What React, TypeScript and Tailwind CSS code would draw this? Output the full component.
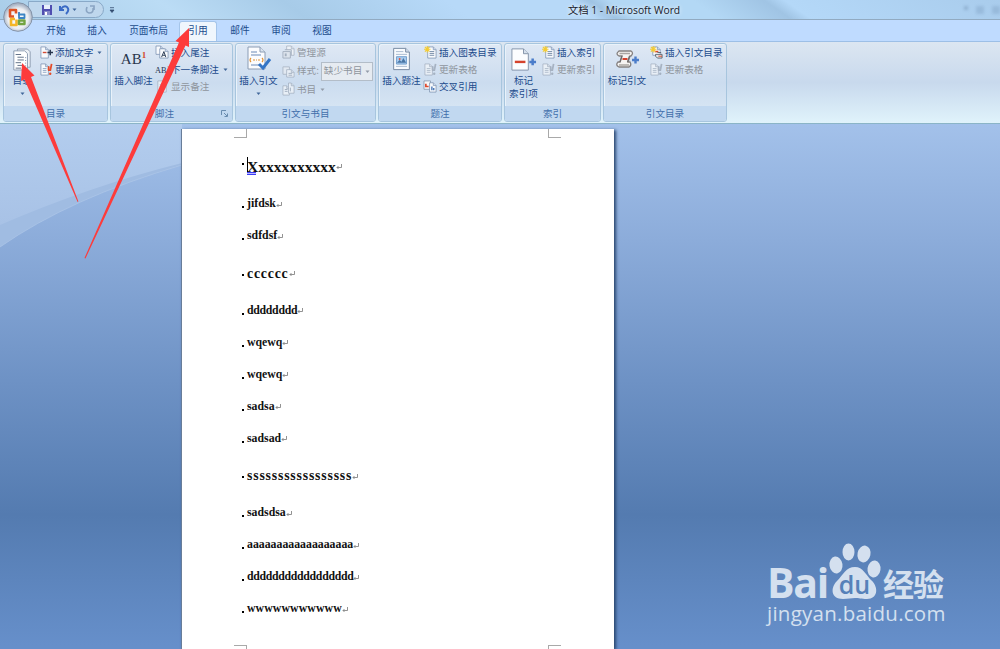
import type { ReactNode } from 'react'

type IconName = 'add' | 'update' | 'endnote' | 'next' | 'notes' | 'manage' | 'style' | 'biblio' | 'figures' | 'cross' | 'index' | 'authorities'

const tabs = [
  { label: '开始', width: 'w-[40px]' },
  { label: '插入', width: 'w-[42px]' },
  { label: '页面布局', width: 'w-[61px]' },
  { label: '引用', width: 'w-[38px]', active: true },
  { label: '邮件', width: 'w-[46px]' },
  { label: '审阅', width: 'w-[36px]' },
  { label: '视图', width: 'w-[46px]' },
]

const paragraphs = [
  { text: 'jifdsk' },
  { text: 'sdfdsf' },
  { text: 'cccccc', heading: true, tracking: 'tracking-[0.8px]' },
  { text: 'dddddddd', tracking: 'tracking-[-0.28px]' },
  { text: 'wqewq' },
  { text: 'wqewq' },
  { text: 'sadsa' },
  { text: 'sadsad' },
  { text: 'sssssssssssssssss', heading: true, tracking: 'tracking-[0.82px]' },
  { text: 'sadsdsa' },
  { text: 'aaaaaaaaaaaaaaaaaa' },
  { text: 'ddddddddddddddddd', tracking: 'tracking-[-0.3px]' },
  { text: 'wwwwwwwwwww', tracking: 'tracking-[0.1px]' },
]

function Page({ x = 2, y = 1, w = 9, h = 12 }: { x?: number; y?: number; w?: number; h?: number }) {
  return (
    <g>
      <path d={`M${x} ${y}h${w - 3}l3 3v${h - 3}h-${w}z`} fill="#f8fafd" stroke="#7a8fb0" strokeWidth=".8" />
      <path d={`M${x + w - 3} ${y}v3h3`} fill="#c8d6e8" stroke="#7a8fb0" strokeWidth=".7" />
    </g>
  )
}

function Star() {
  return <path d="M3.5 0v7M0 3.5h7M1 1l5 5M6 1 1 6" stroke="#f5cc32" strokeWidth="1.2" />
}

function SmallIcon({ name }: { name: IconName }) {
  return (
    <svg width="13" height="13" viewBox="0 0 14 14" fill="none" className="shrink-0 overflow-visible">
      {name === 'add' && (<><Page x={1} w={8} /><path d="M3 7h4" stroke="#d34b35" strokeWidth="1.5" /><path d="M8 7h6M11 4v6" stroke="#26344c" strokeWidth="1.6" /></>)}
      {name === 'update' && (<><Page x={1} w={8} /><path d="M3 6h4M3 8h4M3 10h4" stroke="#91a6c4" /><path d="M9.5 3.5q-.5 3 0 5M12.5 1 11 8.5" stroke="#e54b28" strokeWidth="1.9" /><circle cx="11" cy="11.5" r="1.3" fill="#e54b28" /></>)}
      {name === 'endnote' && (<><Page x={0} y={0} w={8} h={9} /><Page x={4} y={3} w={9} h={10} /><path d="M6 12 8.5 6l2 6M7 10h3" stroke="#25364f" /></>)}
      {name === 'next' && <text x="-1" y="11" fontSize="9" fontFamily="Liberation Serif" fill="#273651">AB<tspan fontSize="7" dy="-4" fill="#d34b35">1</tspan></text>}
      {name === 'notes' && (<><Page /><path d="M4 5h5M4 7h5M4 9h5" stroke="#91a6c4" /></>)}
      {name === 'manage' && (<><Page x={5} y={0} w={8} h={10} /><path d="M1 6h8v7H1zM3 4h7v6" fill="#dbe5f1" stroke="#758eb1" /><path d="M4 8v3" stroke="#758eb1" strokeWidth="2" /></>)}
      {name === 'style' && (<><path d="M1 2h7v8H1z" fill="#e9eff7" stroke="#8da2be" /><Page x={5} y={5} w={8} h={8} /><path d="M7 9h4M7 11h4" stroke="#758eb1" /></>)}
      {name === 'biblio' && (<><Page x={1} y={3} w={7} h={10} /><Page x={7} y={0} w={6} h={11} /><path d="M3 7h3M3 9h3M9 5v4" stroke="#758eb1" /></>)}
      {(name === 'figures' || name === 'index') && (<><Page x={4} w={9} /><path d="M6 6h5M6 8h5M6 10h5" stroke="#7389a5" /><Star /></>)}
      {name === 'cross' && (<><path d="M0 1h7v9H0z" fill="#f6f8fb" stroke="#71839d" strokeWidth=".7" /><Page x={6} y={3} w={7} h={10} /><path d="M2 4v3h3" stroke="#df482d" strokeWidth="1.8" /><path d="M8.5 7v4M10.5 8.5v2.5" stroke="#3d6eb2" strokeWidth="1.4" /></>)}
      {name === 'authorities' && (<><Page x={3} y={1} w={8} h={9} /><path d="M5 6h4" stroke="#d7472d" strokeWidth="1.7" /><path d="M6 9h7v4H8l-2-2zM8 7h4" fill="#e5e5e5" stroke="#59616d" /><path d="M9 11h4" stroke="#d7472d" /><Star /></>)}
    </svg>
  )
}

function Caret({ muted = false }: { muted?: boolean }) {
  return <svg width="5" height="3" viewBox="0 0 5 3" className="shrink-0"><path d="M.5.5h4l-2 2.5z" fill={muted ? '#929ba8' : '#41679a'} /></svg>
}

function Small({ icon, children, disabled, caret }: { icon: IconName; children: ReactNode; disabled?: boolean; caret?: boolean }) {
  return (
    <div className={`flex h-[17px] items-center gap-0.5 ${disabled ? 'text-[#8f959d]' : ''}`}>
      <div className={disabled ? 'opacity-60 saturate-50 [&_path[stroke="#e54b28"]]:stroke-[#7f95b4] [&_circle]:fill-[#7f95b4]' : ''}><SmallIcon name={icon} /></div>
      <span>{children}</span>
      {caret && <div className="ml-0.5"><Caret muted={disabled} /></div>}
    </div>
  )
}

function Large({ icon, children, width, caret }: { icon: ReactNode; children: ReactNode; width: string; caret?: boolean }) {
  return (
    <div className={`flex shrink-0 flex-col items-center ${width}`}>
      <div className="flex h-[30px] items-center justify-center">{icon}</div>
      <div className="text-center leading-[13px]">{children}</div>
      {caret && <div className="flex h-3 items-center"><Caret /></div>}
    </div>
  )
}

function Group({ title, width, launcher, children }: { title: string; width: string; launcher?: boolean; children: ReactNode }) {
  return (
    <section className={`flex h-[79px] shrink-0 flex-col rounded-[3px] border border-[#a7c5de] bg-linear-to-b from-[#dfe8f4] via-[#cbdcef] to-[#dce9f5] shadow-[inset_1px_1px_0_#e9f2fa] ${width}`}>
      <div className="flex h-[62px]">{children}</div>
      <div className="flex h-[15px] items-center justify-center rounded-b-[2px] bg-[#c1d8f0] text-[#426fab]">
        <span className={launcher ? 'ml-auto' : ''}>{title}</span>
        {launcher && <svg width="7" height="7" viewBox="0 0 7 7" className="mr-1 ml-[47px]"><path d="M.5 5V.5H5M3 3l3 3M6.5 3.5v3h-3" fill="none" stroke="#698caf" /></svg>}
      </div>
    </section>
  )
}

function TocIcon() {
  return (
    <svg width="20" height="25" viewBox="0 0 22 27" fill="none">
      <path d="M6 2h11l3 3v17H6z" fill="#edf1f6" stroke="#8b9bb0" />
      <path d="M2 4h12l3 3v18H2z" fill="#fff" stroke="#8495ac" />
      <path d="M4 8h6M6 11h7M6 14h7M4 17h6M6 20h7M4 23h6" stroke="#56677f" />
      <path d="M15 11v1M15 14v1M15 17v1M15 20v1" stroke="#627ca3" />
    </svg>
  )
}

function CitationIcon() {
  return (
    <svg width="26" height="28" viewBox="0 0 26 28" fill="none">
      <path d="M2 2h12l5 5v17H2z" fill="#fbfcfe" stroke="#8b9cb4" />
      <path d="M14 2v5h5" fill="#dce5f0" stroke="#8b9cb4" />
      <path d="M5 7h6M5 10h10M5 20h9" stroke="#9ab0cf" strokeWidth="1.5" />
      <path d="M5 13q-2 2 0 4M16 13q2 2 0 4M7 15h2m1 0h1m1 0h2" stroke="#e29232" strokeWidth="1.2" />
      <path d="m13 19 4 4 7-9" stroke="#3475c6" strokeWidth="3" />
    </svg>
  )
}

function CaptionIcon() {
  return (
    <svg width="19" height="24" viewBox="0 0 20 26" fill="none">
      <path d="M1.5 1.5h13l4 4v19h-17z" fill="#f9fbfe" stroke="#71849d" />
      <path d="M14.5 1.5v4h4" fill="#d7e1ee" stroke="#71849d" />
      <path d="M4 5h8M4 8h12M4 21h12" stroke="#a6b7cd" />
      <path d="M4.5 10.5h11v8h-11z" fill="#a9cbed" stroke="#6d9aca" />
      <path d="m5 17 3-3 2 2 2-4 3 5" fill="#4976a5" /><circle cx="8" cy="13" r="1" fill="#e95036" />
    </svg>
  )
}

function MarkIcon() {
  return (
    <svg width="27" height="25" viewBox="0 0 28 25" fill="none">
      <path d="M2 1.5h12l5 5v17H2z" fill="#fcfdff" stroke="#8494aa" />
      <path d="M14 1.5v5h5" fill="#d5e0ed" stroke="#8494aa" />
      <path d="M5 15h11" stroke="#d5432d" strokeWidth="2.5" />
      <path d="M20 15h7M23.5 11.5v7" stroke="#4b7dca" strokeWidth="2.6" />
    </svg>
  )
}

function ScrollIcon() {
  return (
    <svg width="25" height="22" viewBox="0 0 25 22" fill="none">
      <path d="M4 3h12q3 2 0 5h-1l-2 6h2q2 3-1 5H4q-4-2-1-5h2l2-6H4Q0 6 4 3Z" fill="#f6f4f2" stroke="#858180" strokeWidth="1.3" />
      <path d="M4.5 5.5H15M4 17h10" stroke="#aaa6a3" strokeWidth="1.5" />
      <path d="m7 8-2 6M14.5 8l-2 6" stroke="#6e6a69" strokeWidth="1.2" />
      <path d="M7.5 11h5" stroke="#d5432d" strokeWidth="2" />
      <path d="M17 12h7M20.5 8.5v7" stroke="#4b7dca" strokeWidth="2.4" />
    </svg>
  )
}

function OfficeButton() {
  return (
    <svg width="36" height="34" viewBox="0 0 36 34" fill="none" className="absolute top-0 left-0">
      <defs>
        <radialGradient id="orb" cx="50%" cy="55%">
          <stop stopColor="#fff" />
          <stop offset=".7" stopColor="#eceef2" />
          <stop offset="1" stopColor="#aab5c6" />
        </radialGradient>
      </defs>
      <circle cx="18" cy="17" r="14.3" fill="url(#orb)" stroke="#8493a8" />
      <g strokeLinejoin="round">
        <path d="M16 13.5V10h-6v6.5h4" stroke="#dd5426" strokeWidth="2.6" />
        <path d="M18 14.5h6.5V18H19v-6" stroke="#3b84c4" strokeWidth="1.8" />
        <path d="M15 19h-4v6h5.5v-5.5" stroke="#f4b627" strokeWidth="2.6" />
        <path d="M19 20.5h5.5V24H19z" stroke="#73a441" strokeWidth="2.4" />
      </g>
    </svg>
  )
}

function TitleBar() {
  return (
    <header className="relative z-10 flex h-5 items-center border-b border-[#91aac1] bg-[linear-gradient(35deg,#a9cde8_0%,#bbdcf5_18%,#a7cbe8_30%,#b7d9f8_46%,#b7d9f8_58%,#9fc3e3_60%,#b3d8f5_62%,#b3d8f5_70%,#a0c4e4_77%,#b4d8f8_79%,#a9ccec)]">
      <OfficeButton />
      <div className="ml-7 flex h-[17px] w-[76px] items-center rounded-r-full border border-[#89a9c8] bg-[#bfd7ed] pl-3">
        <svg width="12" height="12" viewBox="0 0 12 12"><path d="M1 1h10v10H1z" fill="#504eb0" /><path d="M3 1h6v4H3z" fill="#e9effb" /><path d="M3 7h6v4H3z" fill="#8589c8" /><path d="M4 8h2v3H4z" fill="#fff" /></svg>
        <svg width="11" height="11" viewBox="0 0 11 11" fill="none" className="ml-1.5"><path d="M1 2v4h4M2 5q3-4 6-2 3 3-1 7" stroke="#3b6bc5" strokeWidth="2" /></svg>
        <div className="ml-0.5 flex"><Caret /></div>
        <svg width="10" height="11" viewBox="0 0 10 11" fill="none" className="ml-2"><path d="M2 3q-2 5 2 6 5 0 4-5M5 2h4v4" stroke="#8ba5c3" strokeWidth="1.7" /></svg>
      </div>
      <svg width="6" height="6" viewBox="0 0 6 6" className="ml-[5px]"><path d="M1 .7h4M1 3h4L3 5.5z" fill="#334c70" stroke="#334c70" strokeWidth=".8" /></svg>
      <h1 className="mt-0.5 ml-[453px] font-['Open_Sans','Noto_Sans_CJK_SC',sans-serif] text-[10.3px] text-[#18202b] [text-shadow:0_0_4px_white]">文档 1 - Microsoft Word</h1>
      <div className="ml-auto flex gap-2 opacity-30 blur-[1.5px]">
        <i className="size-1 bg-[#526f91]" />
        <i className="size-2 bg-[#6f91b5]" />
        <i className="size-2 bg-[#6f91b5]" />
      </div>
    </header>
  )
}

function Ribbon() {
  return (
    <div className="flex h-[83px] gap-0.5 border-y border-t-[#9dbfe6] border-b-[#8bb5c7] bg-linear-to-b from-[#dce6f1] via-[#c8d9ed] to-[#e0f3fb] pt-px pl-[3px] text-[9.6px] leading-none text-[#1c4b8c]">
      <Group title="目录" width="w-[105px]">
        <Large icon={<TocIcon />} width="w-9" caret>目录</Large>
        <div><Small icon="add" caret>添加文字</Small><Small icon="update">更新目录</Small></div>
      </Group>
      <Group title="脚注" width="w-[123px]" launcher>
        <Large width="w-[45px]" icon={<span className="font-['Liberation_Serif',serif] text-[15px] text-[#29364d]">AB<sup className="-top-1.5 text-[9px] font-bold text-[#d14b2b]">1</sup></span>}>插入脚注</Large>
        <div><Small icon="endnote">插入尾注</Small><Small icon="next" caret>下一条脚注</Small><Small icon="notes" disabled>显示备注</Small></div>
      </Group>
      <Group title="引文与书目" width="w-[141px]">
        <Large icon={<CitationIcon />} width="w-[45px]" caret>插入引文</Large>
        <div className="pl-px">
          <Small icon="manage" disabled>管理源</Small>
          <div className="flex h-5 items-center">
            <Small icon="style" disabled>样式:</Small>
            <div className="ml-0.5 flex h-[19px] w-[52px] items-center justify-between border border-[#b3bdc8] bg-[#e6ebf1] px-0.5 text-[#8f959d]">缺少书目<Caret muted /></div>
          </div>
          <Small icon="biblio" disabled caret>书目</Small>
        </div>
      </Group>
      <Group title="题注" width="w-[124px]">
        <Large icon={<CaptionIcon />} width="w-[45px]">插入题注</Large>
        <div><Small icon="figures">插入图表目录</Small><Small icon="update" disabled>更新表格</Small><Small icon="cross">交叉引用</Small></div>
      </Group>
      <Group title="索引" width="w-[97px]">
        <Large icon={<MarkIcon />} width="w-[37px]">标记<br />索引项</Large>
        <div><Small icon="index">插入索引</Small><Small icon="update" disabled>更新索引</Small></div>
      </Group>
      <Group title="引文目录" width="w-[124px]">
        <Large icon={<ScrollIcon />} width="w-[46px]">标记引文</Large>
        <div><Small icon="authorities">插入引文目录</Small><Small icon="update" disabled>更新表格</Small></div>
      </Group>
    </div>
  )
}

function ReturnMark() {
  return <svg width="6" height="6" viewBox="0 0 6 6" fill="none" className="mt-px shrink-0"><path d="M5.5 0v3.5H1M2.5 2 1 3.5 2.5 5" stroke="#777" strokeWidth=".8" /></svg>
}

function Corner({ side }: { side: 'left' | 'right' }) {
  return <i className={`h-full w-[13px] border-[#a9a9a9] ${side === 'left' ? 'border-r' : 'border-l'}`} />
}

function DocumentPage() {
  return (
    <article className="ml-[181px] flex h-[520px] w-[433px] flex-col border-l border-[#687d99] bg-white font-['Liberation_Serif',serif] font-bold text-[#111] shadow-[2px_1px_3px_#29466f]">
      <div className="flex h-[9px] shrink-0 justify-between pr-[53px] pl-[52px] [&>i]:border-b">
        <Corner side="left" />
        <Corner side="right" />
      </div>
      <div className="flex h-[507px] shrink-0 flex-col pt-2 pl-[60px]">
        <div className="flex h-[42px] shrink-0 items-center pb-px text-[15.5px] leading-none">
          <i className="mr-[3px] mb-1.5 size-[2px] bg-black" />
          <span className="relative">
            Xxxxxxxxxxx
            <i className="absolute -top-0.5 left-0 h-4 w-px bg-black" />
            <i className="absolute -bottom-px left-0 h-[3px] w-[9px] border-y border-[#3c3cf5] bg-[#b9b9ff]" />
          </span>
          <ReturnMark />
        </div>
        {paragraphs.map((p, i) => (
          <div key={i} className={`flex shrink-0 items-center leading-none ${p.heading ? 'h-[42.5px] pt-px text-[13.8px]' : 'h-8 text-[11.8px]'}`}>
            <i className={`mr-[3px] size-[2px] bg-black ${p.heading ? 'mt-0.5' : 'mt-[6px]'}`} />
            <span className={p.tracking}>{p.text}</span>
            <ReturnMark />
          </div>
        ))}
      </div>
      <div className="flex h-[5px] shrink-0 justify-between pr-[53px] pl-[52px] [&>i]:border-t">
        <Corner side="left" />
        <Corner side="right" />
      </div>
    </article>
  )
}

function Backdrop() {
  return (
    <svg width="182" height="125" viewBox="0 0 182 125" className="absolute top-[124px] left-0">
      <defs>
        <linearGradient id="glow" x2="0" y2="1">
          <stop stopColor="#b3cdee" />
          <stop offset="1" stopColor="#a8c2e6" />
        </linearGradient>
      </defs>
      <path d="M0 0h182v41Q70 74 0 123z" fill="#a0bce2" />
      <path d="M0 0h182v39Q90 62 0 101z" fill="url(#glow)" />
      <path d="M0 123Q70 74 182 41" fill="none" stroke="#b2c9e9" strokeWidth=".6" />
    </svg>
  )
}

function Arrows() {
  return (
    <svg width="200" height="262" viewBox="0 0 200 262" fill="#fd3b3b" className="absolute top-0 left-0 z-20">
      <path d="m22 63-1 18 3.5-1.5L77.6 202l.8-.4L31 77l3.5-1.5z" />
      <path d="m189 28-13.500 13 3.500 1.500L84.500 258l1 .4L185.500 45.500l3.500 1.500z" />
    </svg>
  )
}

function Watermark() {
  return (
    <div className="absolute top-[540px] left-[767px] w-[182px] text-[#d4e0ef]">
      <div className="flex h-[60px] items-end leading-none font-bold">
        <span className="w-[61px] font-['Open_Sans',sans-serif] text-[41px] leading-[36px] tracking-[-1.3px]">Bai</span>
        <svg width="54" height="58" viewBox="0 0 54 58" fill="currentColor" className="shrink-0">
          <ellipse cx="8" cy="23" rx="6.5" ry="8.5" transform="rotate(-8 8 23)" />
          <ellipse cx="20.5" cy="10" rx="6" ry="8.5" />
          <ellipse cx="36" cy="12" rx="6.5" ry="8.5" transform="rotate(12 36 12)" />
          <ellipse cx="46" cy="27" rx="6.5" ry="8.5" transform="rotate(8 46 27)" />
          <path d="M27 25c8 0 11 8 16 13 8 7 7 19-4 19-6 0-8-1-12-1s-7 1-12 1C3 57 2 46 9 39c6-6 9-14 18-14Z" />
          <text x="26.5" y="52" fontSize="25" textAnchor="middle" fontFamily="Open Sans" fontWeight="600" fill="#5681b9">du</text>
        </svg>
        <span className="ml-px font-['Noto_Sans_CJK_SC',sans-serif] text-[31px] leading-[35px] tracking-[-1px]">经验</span>
      </div>
      <div className="mt-px font-['Open_Sans',sans-serif] text-[20.5px] leading-6 font-medium tracking-[0.25px] whitespace-nowrap">jingyan.baidu.com</div>
    </div>
  )
}

export default function App() {
  return (
    <div className="relative h-[649px] w-[1000px] overflow-hidden bg-[linear-gradient(#a3c1ea_124px,#8cacda_240px,#6e92c5_380px,#547bb0_515px,#668fca_645px)] font-['Noto_Sans_CJK_SC',sans-serif] text-[#1c4b8c]">
      <TitleBar />
      <nav className="flex h-[21px] items-end bg-[#bfdbff] pl-9 text-[9.7px]">
        {tabs.map((tab) => (
          <div key={tab.label} className={`flex h-5 items-center justify-center pb-0.5 ${tab.width} ${tab.active ? 'rounded-t-[3px] border border-b-0 border-[#a5c5ea] bg-[#eff6fd]' : ''}`}>{tab.label}</div>
        ))}
      </nav>
      <Ribbon />
      <Backdrop />
      <main className="relative h-[525px] pt-[5px]">
        <DocumentPage />
      </main>
      <Watermark />
      <Arrows />
    </div>
  )
}
